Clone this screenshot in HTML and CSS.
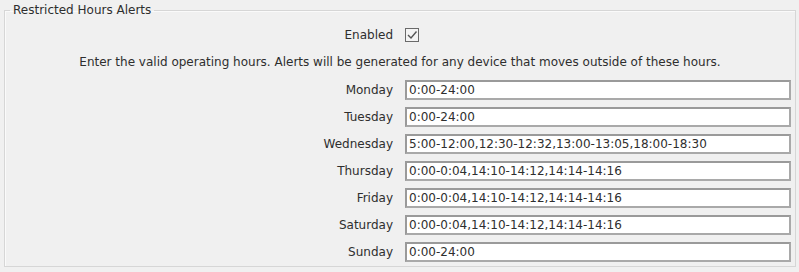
FILE: index.html
```html
<!DOCTYPE html>
<html>
<head>
<meta charset="utf-8">
<link rel="stylesheet" href="styles.css">
</head>
<body>
<fieldset class="panel">
  <legend class="panel-title">Restricted Hours Alerts</legend>
  <div class="enabled-row">
    <span class="label">Enabled</span>
    <span class="check">
      <svg width="14" height="14" viewBox="0 0 14 14">
        <rect x="0.5" y="0.5" width="13" height="13" fill="#f4f4f4" stroke="#6a6a6a"/>
        <path d="M3 7 L6 10 L11.5 3.5" fill="none" stroke="#555" stroke-width="1.4"/>
      </svg>
    </span>
  </div>
  <p class="desc">Enter the valid operating hours. Alerts will be generated for any device that moves outside of these hours.</p>
  <div class="days">
    <label class="label">Monday</label><input class="field" value="0:00-24:00">
    <label class="label">Tuesday</label><input class="field" value="0:00-24:00">
    <label class="label">Wednesday</label><input class="field" value="5:00-12:00,12:30-12:32,13:00-13:05,18:00-18:30">
    <label class="label">Thursday</label><input class="field" value="0:00-0:04,14:10-14:12,14:14-14:16">
    <label class="label">Friday</label><input class="field" value="0:00-0:04,14:10-14:12,14:14-14:16">
    <label class="label">Saturday</label><input class="field" value="0:00-0:04,14:10-14:12,14:14-14:16">
    <label class="label">Sunday</label><input class="field" value="0:00-24:00">
  </div>
</fieldset>
</body>
</html>
```
FILE: styles.css
```css
html, body {
  margin: 0;
  padding: 0;
  background: #f0f0f0;
  font-family: "DejaVu Sans", Verdana, sans-serif;
  font-size: 12px;
  color: #2e2e2e;
}
.panel {
  margin: 3px 3px 0 4px;
  border: 1px solid #d6d6d6;
  box-shadow: inset 1px 1px 0 #fafafa;
  padding: 0 0 4px 0;
}
.panel-title {
  padding: 0 3px;
  margin-left: 5px;
  line-height: 14px;
}
.enabled-row {
  display: grid;
  grid-template-columns: 388px 16px;
  column-gap: 12px;
  align-items: center;
  margin-top: 11px;
}
.label {
  text-align: right;
}
.check svg {
  display: block;
}
.desc {
  margin: 13px 0 0 0;
  line-height: 14px;
  text-align: center;
}
.days {
  display: grid;
  grid-template-columns: 388px 386px;
  column-gap: 12px;
  row-gap: 7px;
  align-items: center;
  margin-top: 11px;
}
.field {
  height: 20px;
  box-sizing: border-box;
  border: 2px solid #a9a9a9;
  border-top-color: #9a9a9a;
  border-left-color: #9a9a9a;
  background: #fff;
  font-family: "DejaVu Sans", Verdana, sans-serif;
  font-size: 12px;
  color: #2e2e2e;
  padding: 0 2px;
  margin: 0;
}
```
